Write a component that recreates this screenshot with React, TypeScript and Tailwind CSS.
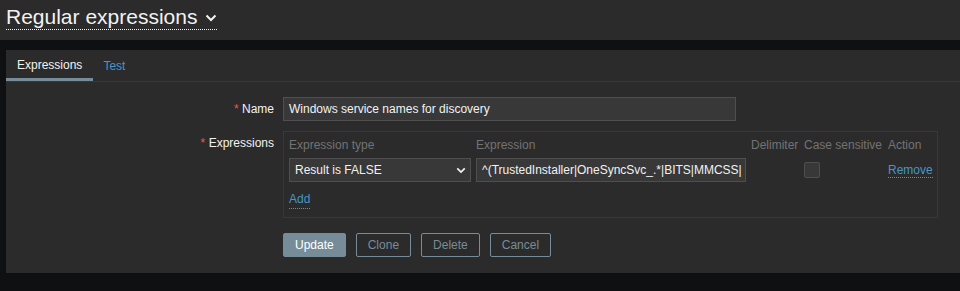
const Chevron = ({ className = "" }: { className?: string }) => (
  <svg viewBox="0 0 12 8" className={className} fill="none" stroke="currentColor" strokeWidth="2">
    <path d="M1.5 1.5 6 6l4.5-4.5" />
  </svg>
);

const Label = ({ text }: { text: string }) => (
  <div className="w-[277px] shrink-0 pr-[9px] text-right text-[#f2f2f2]">
    <span className="text-[#e45959]">*</span> {text}
  </div>
);

const App = () => {
  return (
    <div className="min-h-screen bg-[#0e1012] font-['Liberation_Sans',Arial,sans-serif] text-[12px] text-[#f2f2f2]">
      <header className="flex h-[40px] items-start bg-[#2b2b2b] px-[6px] pt-[4px]">
        <h1 className="flex items-center gap-[8px] border-b border-dotted border-[#f2f2f2] text-[21px] leading-[25px]">
          Regular expressions
          <Chevron className="mt-[2px] h-[8px] w-[12px]" />
        </h1>
      </header>

      <div className="ml-[6px] mt-[10px] bg-[#2b2b2b] pb-[16px]">
        <div className="flex h-[32px] border-b border-[#383838]">
          <div className="flex items-center border-b-[3px] border-[#768d99] px-[11px] pt-[2px] text-[#f2f2f2]">Expressions</div>
          <div className="flex items-center px-[10px] text-[#4796c4]">Test</div>
        </div>

        <div className="flex flex-col gap-[10px] pt-[15px]">
          <div className="flex items-center">
            <Label text="Name" />
            <div className="flex h-[24px] w-[453px] items-center border border-[#4f4f4f] bg-[#383838] px-[5px]">
              Windows service names for discovery
            </div>
          </div>

          <div className="flex items-start">
            <div className="pt-[3px]">
              <Label text="Expressions" />
            </div>
            <div className="w-[655px] border border-[#383838] p-[5px] pb-[6px]">
              <div className="grid grid-cols-[182px_270px_48px_79px_1fr] items-center gap-x-[5px] gap-y-[5px]">
                <div className="h-[16px] leading-[16px] text-[#737373]">Expression type</div>
                <div className="h-[16px] leading-[16px] text-[#737373]">Expression</div>
                <div className="h-[16px] leading-[16px] text-[#737373]">Delimiter</div>
                <div className="h-[16px] whitespace-nowrap leading-[16px] text-[#737373]">Case sensitive</div>
                <div className="h-[16px] leading-[16px] text-[#737373]">Action</div>

                <div className="flex h-[24px] items-center justify-between border border-[#4f4f4f] bg-[#383838] pl-[5px] pr-[4px]">
                  <span>Result is FALSE</span>
                  <Chevron className="h-[7px] w-[10px]" />
                </div>
                <div className="flex h-[24px] items-center overflow-hidden whitespace-nowrap border border-[#4f4f4f] bg-[#383838] px-[5px]">
                  ^(TrustedInstaller|OneSyncSvc_.*|BITS|MMCSS|
                </div>
                <div />
                <div>
                  <div className="h-[16px] w-[16px] rounded-[2px] border border-[#4f4f4f] bg-[#383838]" />
                </div>
                <div>
                  <span className="border-b border-dotted border-[#4796c4] text-[#4796c4]">Remove</span>
                </div>

                <div className="col-span-5 flex h-[24px] items-center">
                  <span className="border-b border-dotted border-[#4796c4] text-[#4796c4]">Add</span>
                </div>
              </div>
            </div>
          </div>

          <div className="flex gap-[10px] pl-[277px] pt-[5px]">
            <button className="h-[24px] rounded-[2px] border border-[#768d99] bg-[#768d99] px-[11px] text-white">Update</button>
            <button className="h-[24px] rounded-[2px] border border-[#768d99] px-[11px] text-[#768d99]">Clone</button>
            <button className="h-[24px] rounded-[2px] border border-[#768d99] px-[11px] text-[#768d99]">Delete</button>
            <button className="h-[24px] rounded-[2px] border border-[#768d99] px-[11px] text-[#768d99]">Cancel</button>
          </div>
        </div>
      </div>
    </div>
  );
};

export default App;
